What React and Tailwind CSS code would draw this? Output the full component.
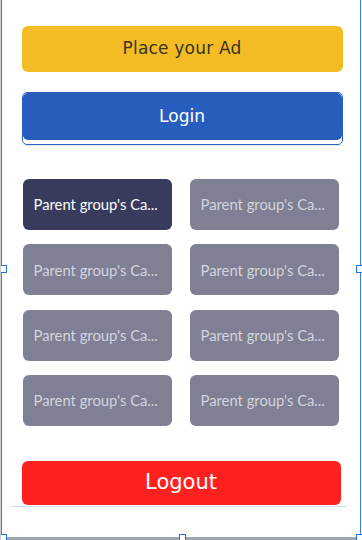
const tiles = [
  { id: 1, active: true },
  { id: 2 },
  { id: 3 },
  { id: 4 },
  { id: 5 },
  { id: 6 },
  { id: 7 },
  { id: 8 },
];

// selection handle of the editor frame
const Handle = ({ className }) => (
  <div className={"absolute w-[7px] h-[8px] bg-white border border-[#1f6fe0] " + className} />
);

const App = () => {
  return (
    <div className="relative w-[362px] h-[540px] bg-white overflow-hidden flex flex-col border-l border-[#c9ccd2]">
      <div className="flex-1 flex flex-col mr-[1px] border-l-[1.5px] border-r border-[#3d80d8]">
        <div className="flex flex-col pt-[26px] pl-[19.5px] pr-[17px]">
          <button className="h-[46px] w-[321px] rounded-[6px] bg-[#f4bc24] text-[#3a3320] text-[17px] font-['DejaVu_Sans',sans-serif] tracking-[0.2px]">
            Place your Ad
          </button>

          <div className="mt-[20px] w-[321px] h-[53px] rounded-[5px] border border-[#2a5fc0] bg-white">
            <button className="h-[47px] w-full rounded-[5px] bg-[#275ebe] text-white text-[17px] font-['DejaVu_Sans',sans-serif]">
              Login
            </button>
          </div>
          <div className="h-px w-[321px] bg-[#e6e8ec]" />

          <div className="mt-[33px] ml-[1px] w-[316px] grid grid-cols-2 gap-x-[18px] gap-y-[14.3px]">
            {tiles.map((t) => (
              <div
                key={t.id}
                className={
                  "h-[51px] rounded-[6px] flex items-center pl-[11px] font-['Lato',sans-serif] text-[14.8px] " +
                  (t.active ? "bg-[#383b5c] text-white" : "bg-[#7f8094] text-[#d3d4dc]")
                }
              >
                Parent group's Ca...
              </div>
            ))}
          </div>

          <button className="mt-[35px] h-[44px] w-[319px] rounded-[6px] bg-[#ff2020] text-white text-[21px] font-['DejaVu_Sans',sans-serif]">
            Logout
          </button>
        </div>
        <div className="mt-px ml-[8.5px] w-[336px] h-px bg-[#bfe3f4]" />
      </div>
      <div className="h-[3px] bg-[#9ea7b2]" />

      <Handle className="left-[-1px] top-[265px]" />
      <Handle className="left-[355px] top-[265px]" />
      <Handle className="left-[-1px] top-[534px]" />
      <Handle className="left-[178px] top-[534px]" />
      <Handle className="left-[355px] top-[534px]" />
    </div>
  );
};

export default App;
